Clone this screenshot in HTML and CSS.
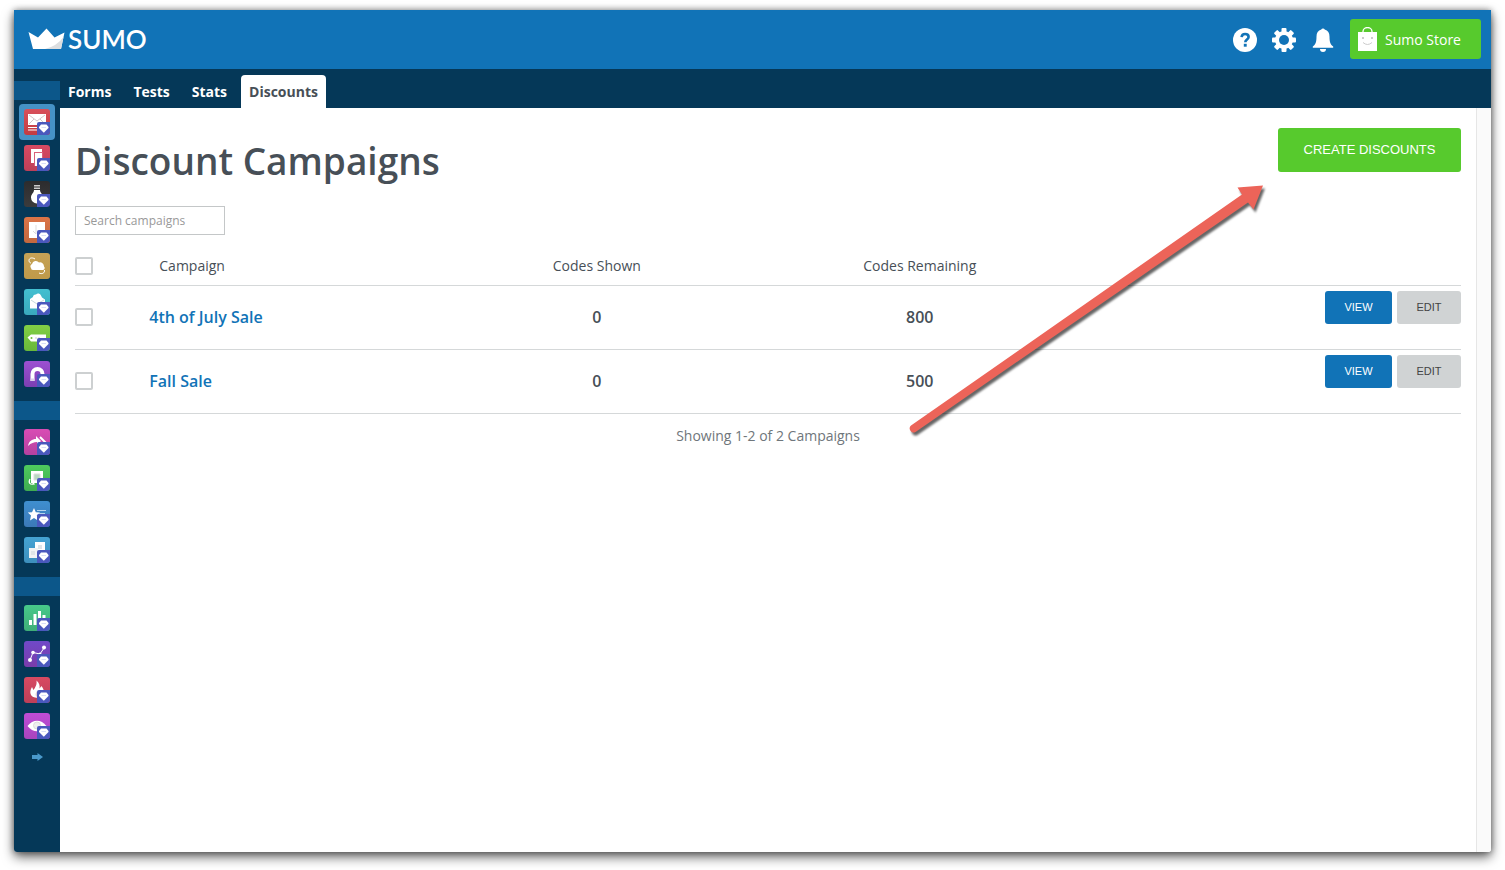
FILE: index.html
```
<!DOCTYPE html>
<html lang="en">
<head>
    <meta charset="UTF-8">
    <meta name="viewport" content="width=device-width, initial-scale=1.0">
    <title>Sumo - Discount Campaigns</title>
    <link rel="stylesheet" href="styles.css">
</head>
<body>
    <svg class="sprites" aria-hidden="true">
        <symbol id="gem" viewBox="0 0 26 26">
            <path class="gem-box" d="M15 13h11v10a3 3 0 0 1-3 3H13V15a2 2 0 0 1 2-2z"/>
            <path d="M17 15.500h5.500l2 2.500v1l-4.700 4.700L15 19v-1z" fill="#fff"/>
            <path d="M17.500 18.500h4.500" fill="none" stroke="#c9d0f4" stroke-width=".7"/>
        </symbol>
    </svg>

    <div class="window">
        <header class="topbar">
            <a class="logo" href="#">
                <svg width="37" height="22" viewBox="0 0 37 22" aria-hidden="true">
                    <path d="M.5 4 10 9.500 18.500.5 26.500 9.500 36.500 4.500 33 21H5z" fill="#fff"/>
                    <path d="M35.500 9 33 21H17Q29 18 35.500 9z" fill="#dcdee0"/>
                </svg>
                <span>SUMO</span>
            </a>
            <div class="actions">
                <button class="icon-btn" aria-label="Help">
                    <svg width="24" height="24" viewBox="0 0 24 24">
                        <circle cx="12" cy="12" r="12" fill="#fff"/>
                        <path d="M8.600 9.200C8.800 7 10.200 6 12.100 6c2 0 3.500 1.100 3.500 2.900 0 2.600-3.300 2.600-3.300 5.300" fill="none" stroke="#1173b7" stroke-width="2.600"/>
                        <rect x="10.800" y="15.800" width="2.900" height="2.900" fill="#1173b7"/>
                    </svg>
                </button>
                <button class="icon-btn" aria-label="Settings">
                    <svg width="24" height="24" viewBox="0 0 24 24">
                        <g fill="#fff">
                            <rect id="tooth" x="9.500" y="0" width="5" height="24" rx="1"/>
                            <use href="#tooth" transform="rotate(45 12 12)"/>
                            <use href="#tooth" transform="rotate(90 12 12)"/>
                            <use href="#tooth" transform="rotate(135 12 12)"/>
                            <circle cx="12" cy="12" r="9"/>
                        </g>
                        <circle cx="12" cy="12" r="5" fill="#1173b7"/>
                    </svg>
                </button>
                <button class="icon-btn" aria-label="Notifications">
                    <svg width="24" height="24" viewBox="0 0 24 24" fill="#fff">
                        <path d="M10.300 1.500a1.800 1.500 0 0 1 3.400 0C17 2.500 18.500 5 18.500 8.500c0 6 1 8 3.700 10v1.300H1.800v-1.300c2.700-2 3.700-4 3.700-10 0-3.500 1.500-6 4.800-7z"/>
                        <path d="M9 21h6a3 3 0 0 1-6 0z"/>
                    </svg>
                </button>
                <a class="store-btn" href="#">
                    <svg width="19" height="24" viewBox="0 0 19 24" aria-hidden="true">
                        <path d="M5 6V4.500a4.500 4 0 0 1 9 0V6" fill="none" stroke="#fff" stroke-width="1.300"/>
                        <path d="M0 5h19v19H0z" fill="#fff"/>
                        <circle cx="5" cy="11" r="1" fill="#bbb"/>
                        <circle cx="14" cy="11" r="1" fill="#bbb"/>
                        <path d="M5 15.500q4.500 4 9 0" fill="none" stroke="#ccc"/>
                    </svg>
                    <span>Sumo Store</span>
                </a>
            </div>
        </header>

        <div class="body">
            <aside class="sidebar">
                <div class="group">
                    <a class="app active" href="#" aria-label="List Builder"><svg class="red" viewBox="0 0 26 26">
                        <path d="M4 5h18v11H4zM4 18h9v1H4zM4 20.500h9v1H4z" fill="#fff"/>
                        <path d="M5 6l8 6 8-6M5 15l5-5M21 15l-5-5" fill="none" stroke="#d3c5c7"/>
                        <use href="#gem"/></svg></a>
                    <a class="app" href="#" aria-label="Smart Bar"><svg class="rose" viewBox="0 0 26 26">
                        <path d="M7 4h11v14H7z" fill="#fff"/><path d="M10 7h9v14h-9z" fill="#d8607a"/><path d="M11 8h7v13h-7z" fill="#fff"/>
                        <use href="#gem"/></svg></a>
                    <a class="app" href="#" aria-label="Welcome Mat"><svg class="black" viewBox="0 0 26 26">
                        <path d="M10 4h6v1.500h-6zM10 6.500h6V8h-6z" fill="#ccc"/><path d="M10 9h6c0 3 3 4 3 7.500a6 6 0 0 1-12 0C7 13 10 12 10 9z" fill="#fff"/>
                        <use href="#gem"/></svg></a>
                    <a class="app" href="#" aria-label="Scroll Box"><svg class="orange" viewBox="0 0 26 26">
                        <path d="M5 5h16v16H5z" fill="#fff"/><path d="M12 8v9M9 14l3 3" fill="none" stroke="#ddd"/>
                        <use href="#gem"/></svg></a>
                    <a class="app" href="#" aria-label="Email Sync"><svg class="gold" viewBox="0 0 26 26">
                        <path d="M7 15a2.500 2.500 0 0 1 1-4 4 4 0 0 1 7-1.500 4 4 0 0 1 5 4 2 2 0 0 1-1 3.500H9a2 2 0 0 1-2-2z" fill="#fff"/>
                        <path d="M11 6C8 4 5 5 5 7.500S7 10 7 10M15 20c3 1.500 6 0 5.500-3" fill="none" stroke="#fff"/></svg></a>
                    <a class="app" href="#" aria-label="Contact Form"><svg class="teal" viewBox="0 0 26 26">
                        <path d="M6 10l3-2a2.500 2.500 0 0 1 3-2.500 3 3 0 0 1 5 1l1 2 3 2v9H6z" fill="#fff"/><path d="M7 11l6 4 7-4" fill="none" stroke="#c8dadd"/>
                        <use href="#gem"/></svg></a>
                    <a class="app" href="#" aria-label="Discounts"><svg class="green" viewBox="0 0 26 26">
                        <path d="M3.500 12.500 7 9.500h15v7H7z" fill="#fff"/><circle cx="7.500" cy="13" r="1" fill="#6fbd3a"/><path d="M12 12v2M15 12v2" stroke="#ccc"/>
                        <use href="#gem"/></svg></a>
                    <a class="app" href="#" aria-label="Sticky Promos"><svg class="purple" viewBox="0 0 26 26">
                        <path d="M8.500 20v-7a5 5 0 0 1 10 0v4" fill="none" stroke="#fff" stroke-width="4"/><path d="M6.500 17.500h4V20h-4z" fill="#ddd0ea"/>
                        <use href="#gem"/></svg></a>
                </div>
                <div class="group">
                    <a class="app" href="#" aria-label="Share"><svg class="pink" viewBox="0 0 26 26">
                        <path d="M4 17c1-5 4-7 8-7V7l5 5-4 4v-3c-3 0-6 1-9 4z" fill="#fff"/><path d="M16 8l6 6-5 5" fill="none" stroke="#fff" stroke-width="2"/>
                        <use href="#gem"/></svg></a>
                    <a class="app" href="#" aria-label="Image Sharer"><svg class="green2" viewBox="0 0 26 26">
                        <path d="M7 6h12v12H7z" fill="#fff"/><path d="M10 9h6v6h-6z" fill="#b9d9c0" stroke="#ddd"/><path d="M6 14c-2 4 0 6 4 5l-2-2" fill="none" stroke="#fff" stroke-width="1.200"/>
                        <use href="#gem"/></svg></a>
                    <a class="app" href="#" aria-label="Highlighter"><svg class="blue" viewBox="0 0 26 26">
                        <path d="M10 7l1.800 4.200 4.200.4-3.200 3 1 4.900-3.800-2.500L6 19.500l1-4.900-3.200-3 4.200-.4z" fill="#fff"/><path d="M13 9.500h9M15 12.500h6" stroke="#b5d5ee"/>
                        <use href="#gem"/></svg></a>
                    <a class="app" href="#" aria-label="Social Pages"><svg class="sky" viewBox="0 0 26 26">
                        <path d="M11 5h10v10H11z" fill="#fff"/><path d="M5 11h9v10H5z" fill="#f1f3f4"/><path d="M14 8h4v4h-4zM7 14h4v4H7z" fill="#dfe5e8"/>
                        <use href="#gem"/></svg></a>
                </div>
                <div class="group">
                    <a class="app" href="#" aria-label="Google Analytics"><svg class="mint" viewBox="0 0 26 26">
                        <path d="M5 15h3v5H5zM9.500 9h3v11h-3zM14 6h3v12h-3zM18.500 10h3v7h-3z" fill="#fff"/>
                        <use href="#gem"/></svg></a>
                    <a class="app" href="#" aria-label="Content Analytics"><svg class="violet" viewBox="0 0 26 26">
                        <path d="M6 19l3-7.500 7 1.500 4-6" fill="none" stroke="#fff"/><g fill="#fff"><circle cx="6" cy="19" r="2"/><circle cx="9" cy="11.500" r="1.800"/><circle cx="16" cy="13" r="1.500"/><circle cx="20" cy="6.500" r="2"/></g>
                        <use href="#gem"/></svg></a>
                    <a class="app" href="#" aria-label="Heat Maps"><svg class="rose" viewBox="0 0 26 26">
                        <path d="M12.500 3.500c3 3 3.500 5 3 8l2-2.500c2 3 3 5 2 8-1 4-10 5.500-12.500 1-1.500-3-.5-5 1-8l1.500 3c2-3 3.500-5 3-9.500z" fill="#fff"/><path d="M13 14c2 2 1 4 0 6-2-1-2-3 0-6z" fill="#e0cdd1"/>
                        <use href="#gem"/></svg></a>
                    <a class="app" href="#" aria-label="Visitor Insights"><svg class="magenta" viewBox="0 0 26 26">
                        <path d="M3.500 13C9 6 17 6 22.500 13 17 20 9 20 3.500 13z" fill="#fff"/><circle cx="13" cy="12.500" r="3.500" fill="#eee" stroke="#ddd"/>
                        <use href="#gem"/></svg></a>
                </div>
                <button class="expand" aria-label="Expand menu">
                    <svg width="11" height="8" viewBox="0 0 11 8"><path d="M0 2h5.500V0L11 4 5.500 8V6H0z" fill="#4a99cb"/></svg>
                </button>
            </aside>

            <div class="main">
                <nav class="tabs">
                    <a href="#">Forms</a>
                    <a href="#">Tests</a>
                    <a href="#">Stats</a>
                    <a class="active" href="#">Discounts</a>
                </nav>
                <div class="scroll">
                    <main class="content">
                        <div class="heading">
                            <h1>Discount Campaigns</h1>
                            <button class="create">CREATE DISCOUNTS</button>
                        </div>
                        <input class="search" type="text" placeholder="Search campaigns" aria-label="Search campaigns">
                        <table class="campaigns">
                            <thead>
                                <tr>
                                    <th class="check"><input type="checkbox" aria-label="Select all campaigns"></th>
                                    <th class="name">Campaign</th>
                                    <th class="num">Codes Shown</th>
                                    <th class="num">Codes Remaining</th>
                                    <th></th>
                                </tr>
                            </thead>
                            <tbody>
                                <tr>
                                    <td><input type="checkbox" aria-label="Select 4th of July Sale"></td>
                                    <td class="name"><a href="#">4th of July Sale</a></td>
                                    <td class="num">0</td>
                                    <td class="num">800</td>
                                    <td class="row-actions"><div><button class="view">VIEW</button><button class="edit">EDIT</button></div></td>
                                </tr>
                                <tr>
                                    <td><input type="checkbox" aria-label="Select Fall Sale"></td>
                                    <td class="name"><a href="#">Fall Sale</a></td>
                                    <td class="num">0</td>
                                    <td class="num">500</td>
                                    <td class="row-actions"><div><button class="view">VIEW</button><button class="edit">EDIT</button></div></td>
                                </tr>
                            </tbody>
                        </table>
                        <p class="count">Showing 1-2 of 2 Campaigns</p>

                        <!-- pointer to the create button -->
                        <svg class="pointer" width="370" height="270" viewBox="0 0 370 270" aria-hidden="true">
                            <path d="M4 252.500 335 21.500 330.500 14.500 356 12.500 346.500 36.500 341 29.500 8.500 259a4 4 0 0 1-4.500-6.500z"/>
                        </svg>
                    </main>
                    <div class="track"></div>
                </div>
            </div>
        </div>
    </div>
</body>
</html>
```
FILE: styles.css
```
:root {
    --blue: #1173b7;
    --navy: #053858;
    --green: #57ca2d;
    --text: #474f57;
    --line: #d5d8d9;
}
* {
    box-sizing: border-box;
}
body {
    font-family: 'Open Sans', sans-serif;
    font-size: 14px;
    margin: 0;
    padding: 10px 14px 18px;
    min-height: 100vh;
    display: flex;
    color: var(--text);
    background: #fff;
}
a {
    text-decoration: none;
}
button {
    border: none;
    padding: 0;
    cursor: pointer;
    font-family: 'Liberation Sans', sans-serif;
}
svg {
    display: block;
}
.sprites {
    position: absolute;
    width: 0;
    height: 0;
}
.window {
    flex: 1;
    display: flex;
    flex-direction: column;
    background: #fff;
    border-radius: 0 0 3px 3px;
    box-shadow: 0 5px 12px rgba(0, 0, 0, 0.6), 0 0 6px rgba(0, 0, 0, 0.4);
}

/* top bar */
.topbar {
    display: flex;
    align-items: center;
    justify-content: space-between;
    height: 59px;
    padding: 0 10px 1px 14px;
    background: var(--blue);
}
.logo {
    display: flex;
    align-items: center;
    gap: 3px;
    color: #fff;
    font-family: Lato, sans-serif;
    font-size: 26px;
    font-weight: 600;
    line-height: 28px;
}
.actions {
    display: flex;
    align-items: center;
    gap: 15px;
}
.icon-btn {
    padding-top: 2px;
    background: none;
}
.store-btn {
    display: flex;
    align-items: center;
    gap: 8px;
    height: 40px;
    padding: 0 20px 0 8px;
    border-radius: 3px;
    background: var(--green);
    color: #fff;
}

/* sidebar */
.body {
    flex: 1;
    display: flex;
}
.sidebar {
    width: 46px;
    padding-top: 12px;
    background: var(--navy);
    border-radius: 0 0 0 3px;
}
.group {
    padding-bottom: 9px;
}
.group::before {
    content: '';
    display: block;
    height: 19px;
    margin-bottom: 4px;
    background: #0c578a;
}
.app {
    display: block;
    width: 36px;
    margin: 0 auto;
    padding: 5px;
    border-radius: 4px;
}
.app.active {
    background: #4592c6;
}
.app svg {
    width: 26px;
    height: 26px;
    border-radius: 3px;
}
.gem-box {
    fill: #4a58bd;
}
.red { background: linear-gradient(#d84f5a, #c23c42); }
.rose { background: linear-gradient(#d84a62, #bd3f58); }
.black { background: linear-gradient(#2c2c2e, #3b3b3c); }
.orange { background: linear-gradient(#dc7447, #c2683f); }
.gold { background: linear-gradient(#c5a256, #bf9a49); }
.teal { background: linear-gradient(#43bfd0, #3aa9bd); }
.green { background: linear-gradient(#82cf45, #68b83a); }
.purple { background: linear-gradient(#9d50d2, #7c3fb2); }
.pink { background: linear-gradient(#d94cb4, #b541a0); }
.green2 { background: linear-gradient(#4ecb5d, #3fac51); }
.blue { background: linear-gradient(#3f8fcf, #3b79b8); }
.sky { background: linear-gradient(#45a3d3, #3d8fbd); }
.mint { background: linear-gradient(#47c98a, #3fae78); }
.violet { background: linear-gradient(#7049c8, #7a3cab); }
.magenta { background: linear-gradient(#bf4dd6, #a844bd); }
.expand {
    display: block;
    width: 100%;
    background: none;
}
.expand svg {
    margin: 0 auto;
}

/* tabs */
.main {
    flex: 1;
    display: flex;
    flex-direction: column;
}
.tabs {
    display: flex;
    align-items: flex-end;
    gap: 6px;
    height: 39px;
    background: var(--navy);
}
.tabs a {
    padding: 0 8px;
    line-height: 33px;
    font-weight: 700;
    color: #fff;
}
.tabs a.active {
    background: #fff;
    color: var(--text);
    border-radius: 4px 4px 0 0;
}
.scroll {
    flex: 1;
    display: flex;
}
.track {
    width: 15px;
    background: #fafafa;
    border-left: 1px solid #e6e6e6;
    border-radius: 0 0 3px 0;
}

/* campaigns */
.content {
    position: relative;
    flex: 1;
    padding: 20px 15px;
}
.heading {
    display: flex;
    justify-content: space-between;
    align-items: flex-start;
}
h1 {
    margin: 8px 0 20px;
    font-size: 37px;
    font-weight: 600;
    line-height: 50px;
}
.create {
    width: 183px;
    height: 44px;
    padding-bottom: 2px;
    border-radius: 3px;
    background: var(--green);
    color: #fff;
    font-size: 13px;
}
.search {
    display: block;
    width: 150px;
    height: 29px;
    padding: 0 8px;
    border: 1px solid #c4c7c8;
    font-family: inherit;
    font-size: 12px;
}
.search::placeholder {
    color: #999;
}
.campaigns {
    width: 100%;
    margin-top: 11px;
    border-collapse: separate;
    border-spacing: 0;
    table-layout: fixed;
}
th, td {
    padding: 0;
    height: 64px;
    border-bottom: 1px solid var(--line);
    text-align: left;
}
th {
    height: 40px;
    font-weight: 400;
}
td {
    padding-bottom: 2px;
    font-size: 16px;
    font-weight: 600;
}
th.check {
    width: 5%;
}
th.name {
    width: 21%;
    padding-left: 15px;
}
td.name {
    padding-left: 5px;
}
th.num {
    width: 23.3%;
}
.num {
    text-align: center;
}
td a {
    color: var(--blue);
}
.campaigns input {
    appearance: none;
    display: block;
    width: 18px;
    height: 18px;
    margin: 0;
    border: 2px solid #cdd0d1;
    border-radius: 2px;
    background: #fff;
}
.row-actions {
    vertical-align: top;
}
.row-actions div {
    display: flex;
    justify-content: flex-end;
    gap: 5px;
    padding-top: 5px;
}
.row-actions button {
    height: 33px;
    padding-bottom: 2px;
    border-radius: 3px;
    font-size: 11px;
}
.row-actions .view {
    width: 67px;
    background: var(--blue);
    color: #fff;
}
.row-actions .edit {
    width: 64px;
    background: #d0d3d4;
    color: #444;
}
.count {
    margin: 12px 0 0;
    text-align: center;
    line-height: 20px;
    color: #6f767b;
}
.pointer {
    position: absolute;
    top: 65px;
    right: 199px;
    fill: #ec6459;
    filter: drop-shadow(2px 3px 1px rgba(0, 0, 0, 0.6));
}
```
